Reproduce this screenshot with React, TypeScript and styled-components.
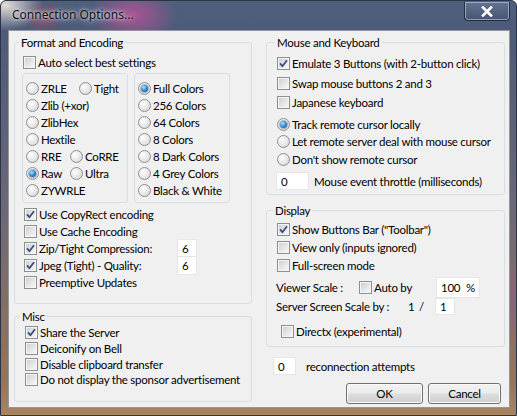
import React from "react";
import styled, { createGlobalStyle } from "styled-components";

const GlobalStyle = createGlobalStyle`
  html, body {
    margin: 0;
    padding: 0;
  }
  body {
    width: 517px;
    height: 416px;
    overflow: hidden;
    font-family: Lato, "Noto Sans", sans-serif;
    font-size: 11.5px;
    letter-spacing: -0.25px;
    color: #000;
  }
`;

const Frame = styled.div`
  width: 517px;
  height: 416px;
  box-sizing: border-box;
  display: flex;
  flex-direction: column;
  border: 1px solid #2c3447;
  border-radius: 6px 6px 0 0;
  overflow: hidden;
  background:
    radial-gradient(ellipse 45px 28px at 132px 14px, rgba(176, 84, 150, 0.95), rgba(176, 84, 150, 0) 100%),
    radial-gradient(ellipse 22px 16px at 42px 16px, rgba(160, 72, 96, 0.7), rgba(160, 72, 96, 0) 100%),
    radial-gradient(ellipse 38px 26px at 4px 4px, rgba(236, 228, 218, 0.95), rgba(236, 228, 218, 0) 100%),
    radial-gradient(ellipse 60px 40px at 517px 300px, rgba(140, 96, 130, 0.8), rgba(140, 96, 130, 0) 100%),
    linear-gradient(to bottom, #4f5f7e 0px, #4c5b79 30px, #6a6778 200px, #977457 380px, #a98563 416px);
`;

const TitleBar = styled.div`
  height: 29px;
  flex: none;
  display: flex;
  align-items: flex-start;
`;

const Title = styled.span`
  margin: 6px 0 0 11px;
  font-family: "Noto Sans", sans-serif;
  font-size: 12px;
  letter-spacing: 0;
  line-height: 16px;
  color: #111;
  text-shadow: 0 0 6px rgba(255, 255, 255, 0.9), 0 0 3px rgba(255, 255, 255, 0.8);
`;

const CloseButton = styled.div`
  margin: 1px 6px 0 auto;
  width: 46px;
  height: 19px;
  box-sizing: border-box;
  border: 1px solid rgba(30, 38, 58, 0.9);
  border-top: none;
  border-radius: 0 0 4px 4px;
  box-shadow: inset 0 0 0 1px rgba(210, 220, 240, 0.55);
  background: linear-gradient(to bottom, rgba(130, 145, 175, 0.4), rgba(60, 72, 100, 0.35));
  display: flex;
  align-items: center;
  justify-content: center;
`;

const Client = styled.div`
  margin: 0 6px 0 7px;
  height: 378px;
  box-sizing: border-box;
  background: #f0f0f0;
  border: 1px solid rgba(40, 40, 50, 0.45);
  display: grid;
  grid-template-columns: 238px 239px;
  column-gap: 14px;
  padding: 0 0 0 5px;
`;

const Column = styled.div`
  display: flex;
  flex-direction: column;
`;

const Group = styled.fieldset<{ $top: number }>`
  margin: ${(p) => p.$top}px 0 0 0;
  padding: 0;
  min-inline-size: 0;
  border: 1px solid #d5dfe5;
  border-radius: 3px;
`;

const Legend = styled.legend<{ $indent: number }>`
  margin-left: ${(p) => p.$indent}px;
  padding: 0 2px;
  line-height: 15px;
`;

const Body = styled.div<{ $pad: string }>`
  padding: ${(p) => p.$pad};
  display: flex;
  flex-direction: column;
`;

const Row = styled.div<{ $h?: number; $mt?: number; $ml?: number }>`
  display: flex;
  align-items: center;
  height: ${(p) => p.$h ?? 17}px;
  margin-top: ${(p) => p.$mt ?? 0}px;
  margin-left: ${(p) => p.$ml ?? 0}px;
  white-space: nowrap;
`;

const Item = styled.label<{ $w?: number }>`
  display: flex;
  align-items: center;
  gap: 2px;
  height: 100%;
  flex: none;
  width: ${(p) => (p.$w ? `${p.$w}px` : "auto")};
`;

const CheckBox = styled.span`
  width: 13px;
  height: 13px;
  box-sizing: border-box;
  flex: none;
  border: 1px solid #8e8f8f;
  padding: 1px;
  background:
    linear-gradient(135deg, #cdd0d5, #f7f7f8) content-box,
    #f4f4f4;
  display: flex;
  align-items: center;
  justify-content: center;
`;

const Radio = styled.span<{ $on?: boolean }>`
  width: 13px;
  height: 13px;
  box-sizing: border-box;
  flex: none;
  border: 1px solid #8e8f8f;
  border-radius: 50%;
  background: radial-gradient(circle at 35% 35%, #ffffff 0%, #e6e6e6 55%, #cdcdcd 100%);
  display: flex;
  align-items: center;
  justify-content: center;
  &::after {
    content: "";
    display: ${(p) => (p.$on ? "block" : "none")};
    width: 7px;
    height: 7px;
    border-radius: 50%;
    background: radial-gradient(circle at 38% 35%, #b9e6ff 0%, #3a8fd2 45%, #0b4f8f 100%);
    box-shadow: 0 0 0 1px rgba(30, 70, 120, 0.35);
  }
`;

const InnerGrid = styled.div`
  display: grid;
  grid-template-columns: 106px 96px;
  column-gap: 6px;
  margin: 2px 0 0 -1px;
`;

const InnerBox = styled.div`
  border: 1px solid #d5dfe5;
  border-radius: 3px;
  padding: 6px 0 3px 3px;
  display: flex;
  flex-direction: column;
`;

const Field = styled.div<{ $w: number; $h: number; $ml?: number }>`
  width: ${(p) => p.$w}px;
  height: ${(p) => p.$h}px;
  margin-left: ${(p) => p.$ml ?? 0}px;
  box-sizing: border-box;
  flex: none;
  background: #fff;
  border: 1px solid #e6e6e6;
  padding: 0 4px;
  display: flex;
  align-items: center;
  justify-content: space-between;
`;

const Text = styled.span<{ $w?: number; $ml?: number }>`
  flex: none;
  width: ${(p) => (p.$w ? `${p.$w}px` : "auto")};
  margin-left: ${(p) => p.$ml ?? 0}px;
`;

const Buttons = styled.div`
  display: flex;
  justify-content: flex-end;
  gap: 5px;
  margin: 8px 4px 0 0;
`;

const Button = styled.div<{ $w: number }>`
  width: ${(p) => p.$w}px;
  height: 21px;
  box-sizing: border-box;
  border: 1px solid #707070;
  border-radius: 3px;
  box-shadow: inset 0 0 0 1px #fbfbfb;
  background: linear-gradient(to bottom, #f2f2f2 0%, #ebebeb 48%, #dddddd 52%, #cfcfcf 100%);
  display: flex;
  align-items: center;
  justify-content: center;
`;

const Tick = () => (
  <svg width="9" height="9" viewBox="0 0 9 9">
    <path d="M1 4.4 L3.4 7.2 L8 1.2" fill="none" stroke="#3b4d7d" strokeWidth="1.8" strokeLinejoin="round" />
  </svg>
);

const Check = ({ label, on, w }: { label: string; on?: boolean; w?: number }) => (
  <Item $w={w}>
    <CheckBox>{on && <Tick />}</CheckBox>
    <span>{label}</span>
  </Item>
);

const Option = ({ label, on, w }: { label: string; on?: boolean; w?: number }) => (
  <Item $w={w}>
    <Radio $on={on} />
    <span>{label}</span>
  </Item>
);

const colors = ["Full Colors", "256 Colors", "64 Colors", "8 Colors", "8 Dark Colors", "4 Grey Colors", "Black & White"];

export default function App() {
  return (
    <>
      <GlobalStyle />
      <Frame>
        <TitleBar>
          <Title>Connection Options...</Title>
          <CloseButton>
            <svg width="12" height="11" viewBox="0 0 12 11">
              <path d="M2 1.5 L10 9.5 M10 1.5 L2 9.5" stroke="#fff" strokeWidth="2.6" strokeLinecap="square" />
            </svg>
          </CloseButton>
        </TitleBar>
        <Client>
          <Column>
            <Group $top={4}>
              <Legend $indent={4}>Format and Encoding</Legend>
              <Body $pad="4px 8px 12px 8px">
                <Row>
                  <Check label="Auto select best settings" />
                </Row>
                <InnerGrid>
                  <InnerBox>
                    <Row>
                      <Option label="ZRLE" w={53} />
                      <Option label="Tight" />
                    </Row>
                    <Row>
                      <Option label="Zlib (+xor)" />
                    </Row>
                    <Row>
                      <Option label="ZlibHex" />
                    </Row>
                    <Row>
                      <Option label="Hextile" />
                    </Row>
                    <Row>
                      <Option label="RRE" w={44} />
                      <Option label="CoRRE" />
                    </Row>
                    <Row>
                      <Option label="Raw" w={44} on />
                      <Option label="Ultra" />
                    </Row>
                    <Row>
                      <Option label="ZYWRLE" />
                    </Row>
                  </InnerBox>
                  <InnerBox>
                    {colors.map((c, i) => (
                      <Row key={c}>
                        <Option label={c} on={i === 0} />
                      </Row>
                    ))}
                  </InnerBox>
                </InnerGrid>
                <Row $mt={3} $ml={1}>
                  <Check label="Use CopyRect encoding" on />
                </Row>
                <Row $ml={1}>
                  <Check label="Use Cache Encoding" />
                </Row>
                <Row $ml={1}>
                  <Check label="Zip/Tight Compression:" on w={153} />
                  <Field $w={20} $h={20}>6</Field>
                </Row>
                <Row $ml={1}>
                  <Check label="Jpeg (Tight) - Quality:" on w={153} />
                  <Field $w={20} $h={19}>6</Field>
                </Row>
                <Row $ml={1}>
                  <Check label="Preemptive Updates" />
                </Row>
              </Body>
            </Group>
            <Group $top={5}>
              <Legend $indent={5}>Misc</Legend>
              <Body $pad="0 10px 13px 10px">
                <Row $h={16}>
                  <Check label="Share the Server" on />
                </Row>
                <Row $h={16}>
                  <Check label="Deiconify on Bell" />
                </Row>
                <Row $h={16}>
                  <Check label="Disable clipboard transfer" />
                </Row>
                <Row $h={15.5}>
                  <Check label="Do not display the sponsor advertisement" />
                </Row>
              </Body>
            </Group>
          </Column>
          <Column>
            <Group $top={4}>
              <Legend $indent={8}>Mouse and Keyboard</Legend>
              <Body $pad="4px 10px 3px 10px">
                <Row $h={19.5}>
                  <Check label="Emulate 3 Buttons (with 2-button click)" on />
                </Row>
                <Row $h={19.5}>
                  <Check label="Swap mouse buttons 2 and 3" />
                </Row>
                <Row $h={19.5}>
                  <Check label="Japanese keyboard" />
                </Row>
                <Row $h={17.5} $mt={3}>
                  <Option label="Track remote cursor locally" on />
                </Row>
                <Row $h={17.5}>
                  <Option label="Let remote server deal with mouse cursor" />
                </Row>
                <Row $h={17.5}>
                  <Option label="Don't show remote cursor" />
                </Row>
                <Row $h={19} $mt={3.5} $ml={-1}>
                  <Field $w={33} $h={18}>0</Field>
                  <Text $ml={5}>Mouse event throttle (milliseconds)</Text>
                </Row>
              </Body>
            </Group>
            <Group $top={8}>
              <Legend $indent={6}>Display</Legend>
              <Body $pad="3px 9px 6px 10px">
                <Row $h={18}>
                  <Check label={'Show Buttons Bar ("Toolbar")'} on />
                </Row>
                <Row $h={18}>
                  <Check label="View only (inputs ignored)" />
                </Row>
                <Row $h={18}>
                  <Check label="Full-screen mode" />
                </Row>
                <Row $h={21} $mt={2.5} $ml={-1}>
                  <Text $w={83}>Viewer Scale :</Text>
                  <Check label="Auto by" w={77} />
                  <Field $w={44} $h={21}>
                    <span>100</span>
                    <span>%</span>
                  </Field>
                </Row>
                <Row $h={17} $ml={-1}>
                  <Text $w={132}>Server Screen Scale by :</Text>
                  <Text $w={11}>1</Text>
                  <Text $w={16}>/</Text>
                  <Field $w={20} $h={17}>1</Field>
                </Row>
                <Row $h={17} $mt={8} $ml={4}>
                  <Check label="Directx (experimental)" />
                </Row>
              </Body>
            </Group>
            <Row $h={18} $mt={10} $ml={7}>
              <Field $w={23} $h={18}>0</Field>
              <Text $ml={10}>reconnection attempts</Text>
            </Row>
            <Buttons>
              <Button $w={77}>OK</Button>
              <Button $w={73}>Cancel</Button>
            </Buttons>
          </Column>
        </Client>
      </Frame>
    </>
  );
}
